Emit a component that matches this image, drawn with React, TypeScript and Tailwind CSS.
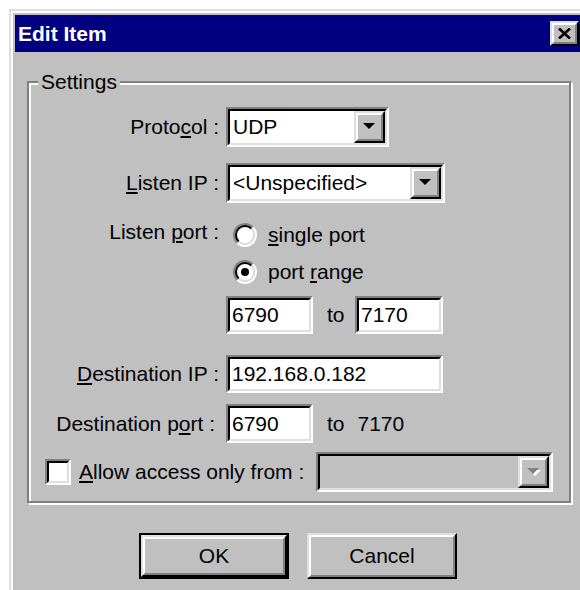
import type { ReactNode } from 'react';
import clsx from 'clsx';

// Win9x style bevels at 2x: two 2px rings per control
function Sunken({ className, inner, children }: { className?: string; inner?: string; children?: ReactNode }) {
  return (
    <div className={clsx('border-2 border-t-[#808080] border-l-[#808080] border-b-white border-r-white', className)}>
      <div
        className={clsx(
          'flex h-full w-full items-center border-2 border-t-black border-l-black border-b-[#dfdfdf] border-r-[#dfdfdf]',
          inner ?? 'bg-white',
        )}
      >
        {children}
      </div>
    </div>
  );
}

function Raised({ className, children }: { className?: string; children?: ReactNode }) {
  return (
    <div className={clsx('border-2 border-t-[#dfdfdf] border-l-[#dfdfdf] border-b-black border-r-black', className)}>
      <div className="flex h-full w-full items-center justify-center border-2 border-t-white border-l-white border-b-[#808080] border-r-[#808080] bg-[#c0c0c0]">
        {children}
      </div>
    </div>
  );
}

function DownArrow({ disabled }: { disabled?: boolean }) {
  return (
    <svg width="14" height="8" viewBox="0 0 14 8">
      {disabled && <polygon points="2,2 14,2 8,8" fill="#fff" />}
      <polygon points="0,0 12,0 6,6" fill={disabled ? '#808080' : '#000'} />
    </svg>
  );
}

function Combo({ value, width, disabled }: { value?: string; width: string; disabled?: boolean }) {
  return (
    <Sunken className={clsx(width, 'h-[40px]')} inner={disabled ? 'bg-[#c0c0c0]' : 'bg-white'}>
      <span className="flex-1 truncate pl-[3px]">{value}</span>
      <Raised className="h-full w-[31px]">
        <DownArrow disabled={disabled} />
      </Raised>
    </Sunken>
  );
}

function Field({ value, width, height = 'h-[38px]' }: { value: string; width: string; height?: string }) {
  return (
    <Sunken className={clsx(width, height)}>
      <span className="pl-[2px]">{value}</span>
    </Sunken>
  );
}

function Radio({ checked, children }: { checked?: boolean; children: ReactNode }) {
  return (
    <div className="flex h-[24px] items-center">
      <span className="h-[24px] w-[24px] rounded-full border-2 border-t-[#808080] border-l-[#808080] border-b-white border-r-white">
        <span className="flex h-full w-full items-center justify-center rounded-full border-2 border-t-black border-l-black border-b-[#dfdfdf] border-r-[#dfdfdf] bg-white">
          {checked && <span className="h-[8px] w-[8px] rounded-full bg-black" />}
        </span>
      </span>
      <span className="ml-[11px]">{children}</span>
    </div>
  );
}

const Key = ({ children }: { children: ReactNode }) => (
  <span className="underline decoration-2 underline-offset-2">{children}</span>
);

function Label({ children, className }: { children: ReactNode; className?: string }) {
  return <div className={clsx('w-[190px] shrink-0 text-right', className)}>{children}</div>;
}

export default function App() {
  return (
    <div className="h-[590px] w-[580px] overflow-hidden bg-white text-[21px] leading-[24px] text-black [font-family:'Liberation_Sans',Arial,sans-serif]">
      <div className="ml-[9px] mt-[9px] w-[600px] border-l-2 border-t-2 border-[#dfdfdf]">
        <div className="border-l-2 border-t-2 border-white">
          <div className="h-[620px] bg-[#c0c0c0] pl-[2px] pt-[2px]">
            {/* caption */}
            <div className="flex h-[37px] w-[568px] items-center bg-[#000080] pl-[3px]">
              <span className="text-[21px] font-bold text-white">Edit Item</span>
              <Raised className="ml-auto mr-[4px] h-[25px] w-[29px]">
                <svg width="13" height="11" viewBox="0 0 13 11">
                  <path d="M1 0.5 L12 10.5 M12 0.5 L1 10.5" stroke="#000" strokeWidth="2.6" />
                </svg>
              </Raised>
            </div>

            {/* Settings group */}
            <div className="relative ml-[12px] mt-[29px] h-[422px] w-[544px] border-2 border-[#808080] shadow-[inset_2px_2px_0_#fff,2px_2px_0_#fff]">
              <span className="absolute left-[9px] top-[-13px] bg-[#c0c0c0] px-[3px]">Settings</span>

              <div className="mt-[24px] flex items-center">
                <Label>
                  Proto<Key>c</Key>ol :
                </Label>
                <div className="ml-[7px]">
                  <Combo value="UDP" width="w-[163px]" />
                </div>
              </div>

              <div className="mt-[16px] flex items-center">
                <Label>
                  <Key>L</Key>isten IP :
                </Label>
                <div className="ml-[7px]">
                  <Combo value="<Unspecified>" width="w-[219px]" />
                </div>
              </div>

              <div className="mt-[20px] flex items-start">
                <Label className="-mt-[3px]">
                  Listen <Key>p</Key>ort :
                </Label>
                <div className="ml-[14px] flex flex-col gap-[13px]">
                  <Radio>
                    <Key>s</Key>ingle port
                  </Radio>
                  <Radio checked>
                    port <Key>r</Key>ange
                  </Radio>
                </div>
              </div>

              <div className="ml-[197px] mt-[12px] flex items-center">
                <Field value="6790" width="w-[87px]" />
                <span className="w-[42px] pl-[14px]">to</span>
                <Field value="7170" width="w-[88px]" />
              </div>

              <div className="mt-[21px] flex items-center">
                <Label>
                  <Key>D</Key>estination IP :
                </Label>
                <div className="ml-[7px]">
                  <Field value="192.168.0.182" width="w-[217px]" />
                </div>
              </div>

              <div className="mt-[11px] flex items-center">
                <Label className="pr-[4px]">
                  Destination p<Key>o</Key>rt :
                </Label>
                <div className="ml-[7px]">
                  <Field value="6790" width="w-[87px]" height="h-[39px]" />
                </div>
                <span className="ml-[14px]">to</span>
                <span className="ml-[13px]">7170</span>
              </div>

              <div className="mt-[9px] flex items-center">
                <Sunken className="ml-[16px] h-[26px] w-[26px] shrink-0" />
                <span className="ml-[8px] whitespace-nowrap">
                  <Key>A</Key>llow access only from :
                </span>
                <div className="ml-auto mr-[16px]">
                  <Combo width="w-[237px]" disabled />
                </div>
              </div>
            </div>

            {/* dialog buttons */}
            <div className="ml-[124px] mt-[30px] flex gap-[18px]">
              <div className="h-[46px] w-[150px] border-2 border-black">
                <Raised className="h-full w-full">OK</Raised>
              </div>
              <Raised className="h-[46px] w-[150px]">Cancel</Raised>
            </div>
          </div>
        </div>
      </div>
    </div>
  );
}
